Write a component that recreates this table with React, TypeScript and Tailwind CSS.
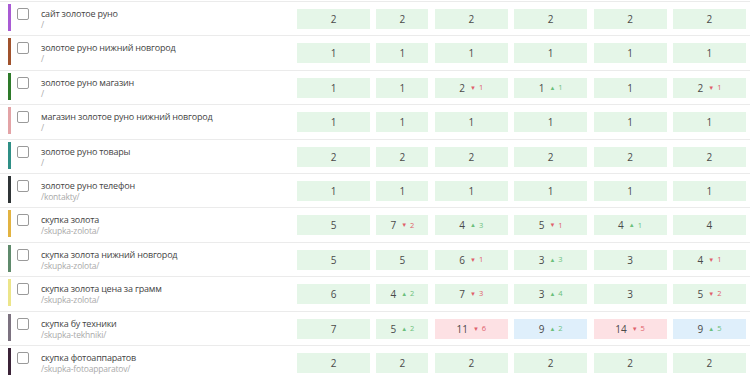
type Cell = { v: number; d?: number; bg?: "red" | "blue" };

type Row = {
  title: string;
  url: string;
  color: string;
  cells: Cell[];
};

const c = (v: number, d?: number, bg?: "red" | "blue"): Cell => ({ v, d, bg });
const same = (v: number) => [c(v), c(v), c(v), c(v), c(v), c(v)];

const rows: Row[] = [
  { title: "сайт золотое руно", url: "/", color: "bg-[#a95bd4]", cells: same(2) },
  { title: "золотое руно нижний новгород", url: "/", color: "bg-[#a0522d]", cells: same(1) },
  {
    title: "золотое руно магазин",
    url: "/",
    color: "bg-[#2e7a2a]",
    cells: [c(1), c(1), c(2, -1), c(1, 1), c(1), c(2, -1)],
  },
  { title: "магазин золотое руно нижний новгород", url: "/", color: "bg-[#e3a3a6]", cells: same(1) },
  { title: "золотое руно товары", url: "/", color: "bg-[#2f8f86]", cells: same(2) },
  { title: "золотое руно телефон", url: "/kontakty/", color: "bg-[#2f3436]", cells: same(1) },
  {
    title: "скупка золота",
    url: "/skupka-zolota/",
    color: "bg-[#e2b341]",
    cells: [c(5), c(7, -2), c(4, 3), c(5, -1), c(4, 1), c(4)],
  },
  {
    title: "скупка золота нижний новгород",
    url: "/skupka-zolota/",
    color: "bg-[#5f8a6c]",
    cells: [c(5), c(5), c(6, -1), c(3, 3), c(3), c(4, -1)],
  },
  {
    title: "скупка золота цена за грамм",
    url: "/skupka-zolota/",
    color: "bg-[#ece58a]",
    cells: [c(6), c(4, 2), c(7, -3), c(3, 4), c(3), c(5, -2)],
  },
  {
    title: "скупка бу техники",
    url: "/skupka-tekhniki/",
    color: "bg-[#7c7280]",
    cells: [c(7), c(5, 2), c(11, -6, "red"), c(9, 2, "blue"), c(14, -5, "red"), c(9, 5, "blue")],
  },
  { title: "скупка фотоаппаратов", url: "/skupka-fotoapparatov/", color: "bg-[#3b2338]", cells: same(2) },
];

function Position({ cell, wide }: { cell: Cell; wide: boolean }) {
  const bg =
    cell.bg === "red" ? "bg-[#fde1e4]" : cell.bg === "blue" ? "bg-[#dfeffb]" : "bg-[#e5f6e8]";
  return (
    <div
      className={`flex h-[20px] items-center justify-center gap-[5px] ${bg} ${
        wide ? "w-[73px]" : "w-[52px]"
      }`}
    >
      <span className="text-[10px] leading-none text-[#4a4a4a]">{cell.v}</span>
      {cell.d !== undefined && (
        <span
          className={`flex items-center gap-[3px] text-[7.5px] leading-none ${
            cell.d < 0 ? "text-[#e0606a]" : "text-[#6cbf7c]"
          }`}
        >
          <span className="text-[6px]">{cell.d < 0 ? "▼" : "▲"}</span>
          {Math.abs(cell.d)}
        </span>
      )}
    </div>
  );
}

export default function App() {
  return (
    <div
      className="h-[379px] w-[750px] overflow-hidden bg-white pt-px"
      style={{ fontFamily: '"Open Sans", "Noto Sans", sans-serif' }}
    >
      {rows.map((row) => (
        <div key={row.title} className="flex h-[34.4px] border-t border-[#ebebeb]">
          <div className="flex w-[297px] shrink-0 pl-[8px] pt-[2px]">
            <div className={`h-[27px] w-[3px] ${row.color}`} />
            <div className="ml-[6px] mt-[4px] h-[12px] w-[12px] rounded-[2px] border border-[#9a9a9a] bg-white" />
            <div className="ml-[12px] mt-[4px] flex flex-col">
              <span className="text-[9px] leading-[11px] tracking-[-0.2px] text-[#444]">
                {row.title}
              </span>
              <span className="text-[8.5px] leading-[11px] tracking-[-0.2px] text-[#aaa]">
                {row.url}
              </span>
            </div>
          </div>
          <div className="flex gap-[6.4px] pt-[7px]">
            {row.cells.map((cell, i) => (
              <Position key={i} cell={cell} wide={i !== 1} />
            ))}
          </div>
        </div>
      ))}
    </div>
  );
}
